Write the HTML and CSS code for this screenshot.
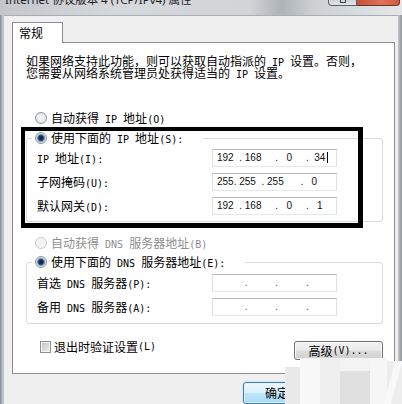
FILE: index.html
```html
<!DOCTYPE html>
<html lang="zh-CN">
<head>
<meta charset="utf-8">
<title>Internet 协议版本 4 (TCP/IPv4) 属性</title>
<link rel="stylesheet" href="styles.css">
</head>
<body>
<div class="window">
  <div class="titlebar">
    <div class="title"><span>Internet 协议版本 4 (TCP/IPv4) 属性</span></div>
    <div class="caption-buttons">
      <span class="cap-btn cap-max"><i></i></span>
      <span class="cap-btn cap-close"></span>
    </div>
  </div>

  <div class="client">
    <div class="tabs"><div class="tab">常规</div></div>

    <div class="panel">
      <div class="desc">
        <div class="line">如果网络支持此功能，则可以获取自动指派的<span class="m"> IP </span>设置。否则，</div>
        <div class="line">您需要从网络系统管理员处获得适当的<span class="m"> IP </span>设置。</div>
      </div>

      <div class="radio-row auto-ip"><span class="radio"></span><span>自动获得<span class="m"> IP </span>地址<span class="m">(O)</span></span></div>

      <div class="group group-ip">
        <div class="radio-row legend"><span class="radio on"></span><span>使用下面的<span class="m"> IP </span>地址<span class="m">(S):</span></span></div>
        <div class="field-row first">
          <span class="label"><span class="m">IP </span>地址<span class="m">(I):</span></span>
          <span class="ipbox">192  . 168     .   0     .  34<span class="caret"></span></span>
        </div>
        <div class="field-row">
          <span class="label">子网掩码<span class="m">(U):</span></span>
          <span class="ipbox">255. 255  . 255      .   0</span>
        </div>
        <div class="field-row">
          <span class="label">默认网关<span class="m">(D):</span></span>
          <span class="ipbox">192  . 168     .   0     .   1</span>
        </div>
      </div>

      <div class="radio-row auto-dns disabled"><span class="radio off"></span><span>自动获得<span class="m"> DNS </span>服务器地址<span class="m">(B)</span></span></div>

      <div class="group group-dns">
        <div class="radio-row legend"><span class="radio on"></span><span>使用下面的<span class="m"> DNS </span>服务器地址<span class="m">(E):</span></span></div>
        <div class="field-row first">
          <span class="label">首选<span class="m"> DNS </span>服务器<span class="m">(P):</span></span>
          <span class="ipbox empty">          .          .          .</span>
        </div>
        <div class="field-row">
          <span class="label">备用<span class="m"> DNS </span>服务器<span class="m">(A):</span></span>
          <span class="ipbox empty">          .          .          .</span>
        </div>
      </div>

      <div class="check-row">
        <span class="check-label"><span class="check"></span>退出时验证设置<span class="m">(L)</span></span>
        <span class="btn btn-advanced">高级<span class="m">(V)...</span></span>
      </div>
    </div>

    <div class="footer">
      <span class="btn btn-default">确定</span>
    </div>
  </div>

  <!-- highlight frame around the static IP section -->
  <div class="mark"></div>

  <!-- faded stamp in the lower right corner -->
  <svg class="stamp" width="119" height="47" viewBox="0 0 119 47">
    <path d="M2 47 V13 Q2 10 5 10 H17 V3 Q17 1 20 1 H100 Q104 1 106 4 L119 4 V47 Z" fill="#f3f3f3"/>
    <rect x="2" y="10" width="15" height="37" fill="#e9e9e9"/>
    <rect x="17" y="2" width="20" height="45" fill="#f8f8f8"/>
    <rect x="37" y="2" width="20" height="45" fill="#efefef"/>
    <rect x="57" y="14" width="30" height="33" fill="#e0e0e0"/>
    <rect x="87" y="2" width="17" height="45" fill="#f6f6f6"/>
    <rect x="104" y="5" width="15" height="42" fill="#ededed"/>
    <path d="M112 5 L119 5 L108 47 L101 47 Z" fill="#f8f8f8"/>
  </svg>
</div>
</body>
</html>
```

FILE: styles.css
```css
* {
  box-sizing: border-box;
}

html,
body {
  margin: 0;
  padding: 0;
}

body {
  width: 402px;
  height: 404px;
  overflow: hidden;
  font-family: "Noto Sans CJK SC", sans-serif;
  font-size: 12px;
  color: #000;
}

/* ---------- window frame ---------- */

.window {
  position: relative;
  width: 402px;
  height: 404px;
  display: flex;
  flex-direction: column;
  overflow: hidden;
  background: linear-gradient(90deg, #7f8489 0, #b7bcc1 2px, #c9cdd1 4px, #cfd3d6 50%, #c4c8cc 99%, #8d9297 100%);
}

.titlebar {
  height: 15px;
  flex: none;
  display: flex;
  justify-content: space-between;
  align-items: flex-start;
  padding-left: 5px;
  background: linear-gradient(90deg, #c3c7cb 0, #d6d9dc 30%, #d2d5d8 62%, #aeb3b8 70%, #cdd1d4 78%, #d8dbde 88%, #e4e6e8 100%);
}

.title {
  font-family: "Noto Sans", "Noto Sans CJK SC", sans-serif;
  font-size: 11.5px;
  line-height: 12px;
  height: 7px;
  overflow: hidden;
  color: #1d1d1d;
  white-space: nowrap;
}

/* only the lower half of the caption shows above the client area */
.title span {
  display: block;
  margin-top: -6px;
}

.caption-buttons {
  display: flex;
  margin-right: 2px;
}

.cap-btn {
  display: block;
  height: 6px;
  border: 1px solid #5b6168;
  border-top: none;
}

.cap-max {
  width: 29px;
  border-radius: 0 0 0 4px;
  background: linear-gradient(#cfd4d9, #e3e6e9);
  position: relative;
}

.cap-max i {
  position: absolute;
  left: 11px;
  top: 0;
  width: 6px;
  height: 3px;
  border: 1px solid #3b3f44;
  border-top: none;
}

.cap-close {
  width: 43px;
  border-color: #6b3328;
  border-left: none;
  border-radius: 0 0 4px 0;
  background: linear-gradient(90deg, #c9503a, #dd7358 60%, #cf5a42);
}

/* ---------- dialog client area ---------- */

.client {
  flex: 1;
  margin: 0 4px;
  padding: 6px 3px 0 8px;
  background: #f0f0f0;
  border-top: 1px solid #a9aeb3;
  display: flex;
  flex-direction: column;
}

.tabs {
  display: flex;
  height: 20px;
  flex: none;
}

.tab {
  position: relative;
  z-index: 1;
  width: 51px;
  height: 21px;
  padding-left: 6px;
  line-height: 19px;
  background: #fff;
  border: 1px solid #898c95;
  border-bottom: none;
}

.panel {
  height: 332px;
  flex: none;
  display: flex;
  flex-direction: column;
  align-items: flex-start;
  background: #fff;
  border: 1px solid #898c95;
}

.desc {
  height: 24px;
  margin: 12px 0 0 13px;
}

.desc .line {
  height: 12px;
  line-height: 12px;
  white-space: nowrap;
}

/* monospaced half-width run inside CJK labels */
.m {
  font-family: "DejaVu Sans Mono", monospace;
  font-size: 10px;
  line-height: 1;
  white-space: pre;
}

/* ---------- radios, checkbox ---------- */

.radio-row {
  display: flex;
  align-items: center;
  height: 16px;
  line-height: 16px;
  white-space: nowrap;
}

.radio {
  flex: none;
  width: 12px;
  height: 12px;
  margin-right: 4px;
  border-radius: 50%;
  border: 1px solid #8d969f;
  background: radial-gradient(circle, #f7f7f7 0, #eeeeee 45%, #d3d6d9 100%);
}

.radio.on {
  background: radial-gradient(circle, #17222e 0, #1f3347 2.2px, #4f7fa8 3.2px, #b8d3ea 4.2px, #eef2f5 5.2px);
}

.radio.off {
  border-color: #c9ccd0;
  background: #f3f3f3;
}

.auto-ip {
  margin: 31px 0 0 22px;
}

.auto-dns {
  margin: 13px 0 0 22px;
}

.disabled {
  color: #8d8d8d;
}

.check-row {
  display: flex;
  justify-content: space-between;
  align-items: flex-start;
  align-self: stretch;
  height: 21px;
  margin: 15px 11px 0 27px;
}

.check-label {
  display: flex;
  align-items: center;
  height: 16px;
  line-height: 16px;
  white-space: nowrap;
}

.check {
  flex: none;
  width: 11px;
  height: 12px;
  margin-right: 3px;
  border: 1px solid #8e8f8f;
  background: linear-gradient(135deg, #c4c4c4, #ececec);
  box-shadow: inset 0 0 0 1px #f6f6f6;
}

/* ---------- group boxes ---------- */

.group {
  display: flex;
  flex-direction: column;
  align-items: flex-start;
  width: 357px;
  margin-left: 13px;
  border: 1px solid #d5dbe0;
  border-radius: 3px;
}

.group-ip {
  height: 84px;
  margin-top: 12px;
}

.group-dns {
  height: 62px;
  margin-top: 11px;
}

.legend {
  margin: -9px 0 0 5px;
  padding: 0 20px 0 3px;
  background: #fff;
}

.field-row {
  display: flex;
  align-items: center;
  height: 18px;
  line-height: 16px;
  margin-top: 6px;
  padding-left: 10px;
}

.group-ip .field-row.first {
  margin-top: 3px;
}

.group-dns .field-row.first {
  margin-top: 4px;
}

.label {
  width: 175px;
  white-space: nowrap;
}

.ipbox {
  display: block;
  width: 125px;
  height: 18px;
  padding-left: 4px;
  border: 1px solid;
  border-color: #b3b7bd #dde1e6 #e4e8ec #dde1e6;
  background: #fff;
  font-family: "Liberation Sans", sans-serif;
  font-size: 10px;
  line-height: 16px;
  white-space: pre;
  color: #111;
}

.ipbox.empty {
  color: #555;
}

.caret {
  display: inline-block;
  width: 1px;
  height: 11px;
  margin-left: 2px;
  vertical-align: -2px;
  background: #000;
}

/* ---------- push buttons ---------- */

.btn {
  display: flex;
  align-items: center;
  justify-content: center;
  white-space: nowrap;
  line-height: 16px;
  border: 1px solid #707070;
  border-radius: 3px;
  background: linear-gradient(#f2f2f2 0, #ebebeb 48%, #dddddd 52%, #cfcfcf 100%);
  box-shadow: inset 0 0 0 1px #fbfbfb;
}

.btn-advanced {
  width: 89px;
  height: 19px;
  margin-top: 2px;
}

.footer {
  display: flex;
  margin-top: 8px;
}

.btn-default {
  width: 68px;
  height: 22px;
  margin-left: 231px;
  border-color: #3c7fb1;
  background: linear-gradient(#eaf6fd 0, #d9f0fc 48%, #bee6fd 52%, #a7d9f5 100%);
  box-shadow: inset 0 0 0 1px #dff2fd, 0 0 2px #9fd0f0;
}

/* ---------- overlays ---------- */

.mark {
  position: absolute;
  left: 21px;
  top: 127px;
  width: 342px;
  height: 101px;
  border: solid #000;
  border-width: 4px 5px 5px 4px;
}

.stamp {
  position: absolute;
  left: 283px;
  top: 357px;
  display: block;
}
```
